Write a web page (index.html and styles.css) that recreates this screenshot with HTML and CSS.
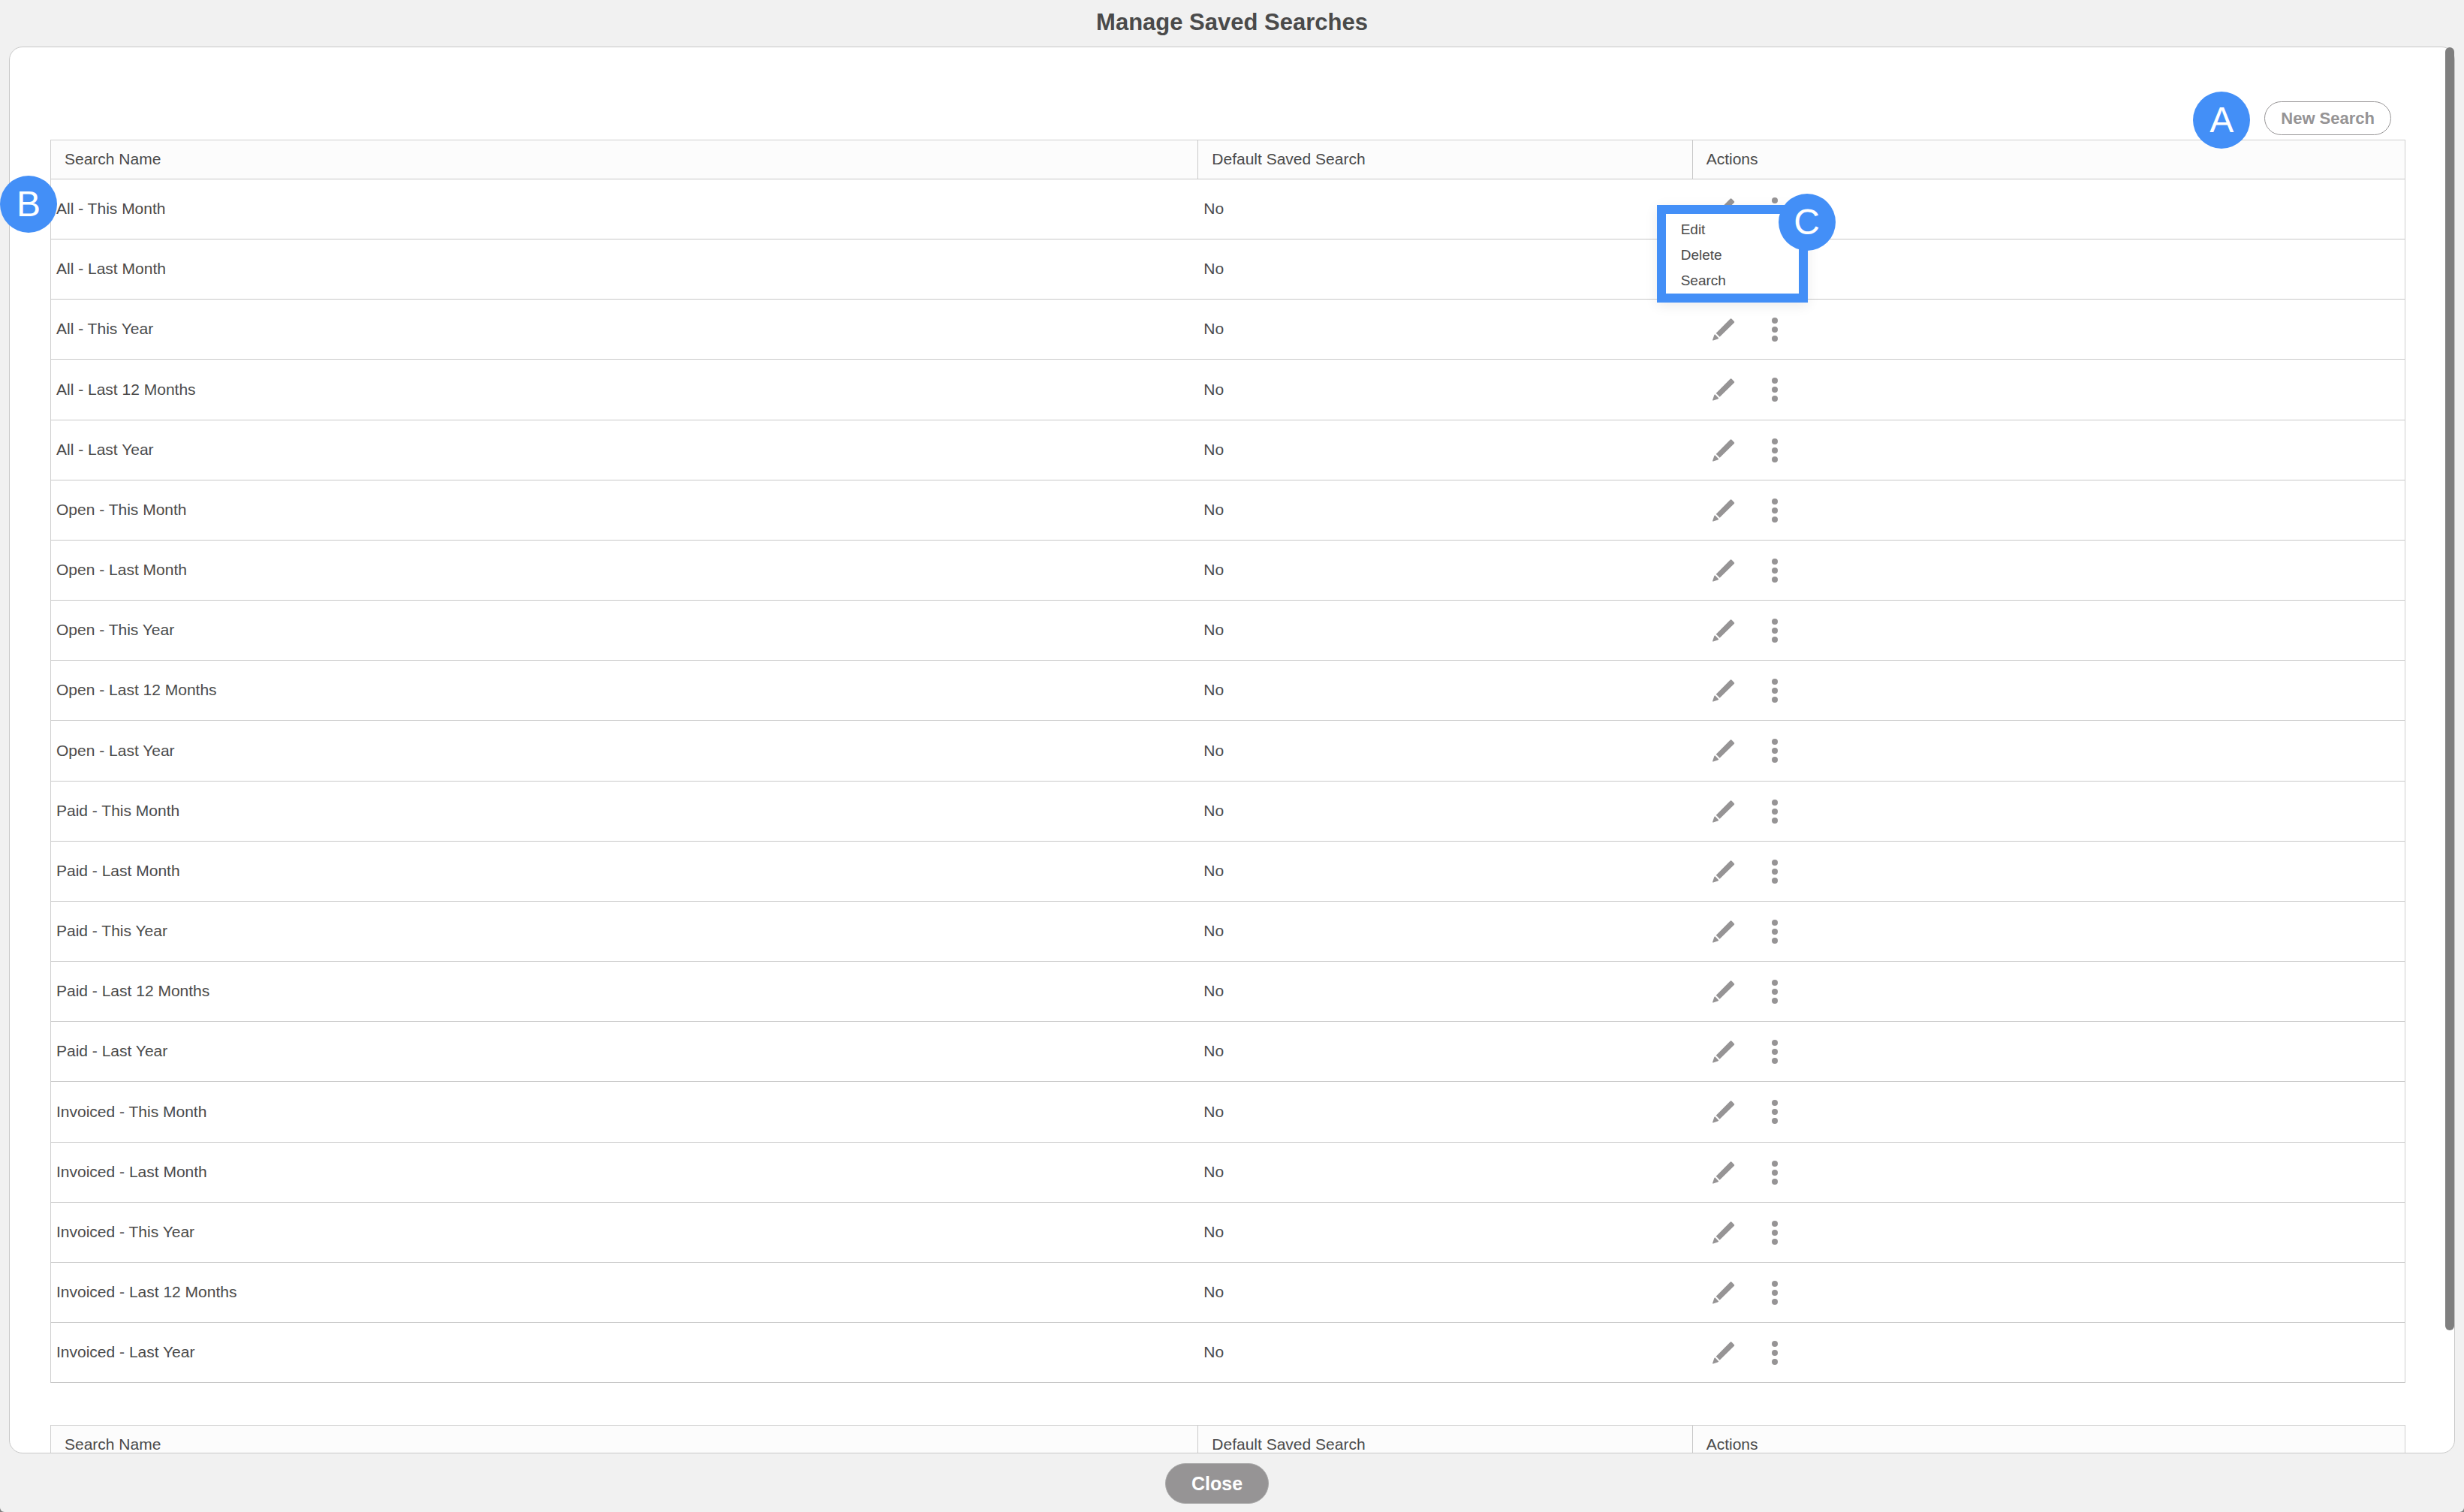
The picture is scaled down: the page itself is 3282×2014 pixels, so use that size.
FILE: index.html
```html
<!DOCTYPE html>
<html lang="en">
<head>
    <meta charset="UTF-8">
    <meta name="viewport" content="width=device-width, initial-scale=1.0">
    <title>Manage Saved Searches</title>
    <link rel="stylesheet" href="styles.css">
</head>
<body>
    <svg class="icon-defs" aria-hidden="true">
        <symbol id="icon-pencil" viewBox="0 0 30 30">
            <path d="M4.7 19.8 L23.6 0.8 Q24.6 -0.2 25.6 0.8 L28.7 4 Q29.7 5 28.7 6 L9.6 24.8 Z"/>
            <path d="M3.3 21.3 L8.2 26.3 Q8 27.3 7 27.6 L1 29.4 Q-0.2 29.6 0.2 28.4 L2.2 22.6 Q2.5 21.6 3.3 21.3 Z"/>
        </symbol>
        <symbol id="icon-dots" viewBox="0 0 8 32">
            <circle cx="4" cy="4" r="4"/>
            <circle cx="4" cy="16" r="4"/>
            <circle cx="4" cy="28" r="4"/>
        </symbol>
    </svg>

    <div class="dialog">
        <header class="dialog-header">
            <h1>Manage Saved Searches</h1>
        </header>

        <main class="panel">
            <div class="panel-content">
                <div class="toolbar">
                    <div class="toolbar-item">
                        <span class="badge badge-a">A</span>
                        <button type="button" class="new-search">New Search</button>
                    </div>
                </div>

                <table class="searches">
                    <thead>
                        <tr>
                            <th class="col-name">Search Name</th>
                            <th class="col-default">Default Saved Search</th>
                            <th>Actions</th>
                        </tr>
                    </thead>
                    <tbody id="searchRows"></tbody>
                </table>

                <table class="searches">
                    <thead>
                        <tr>
                            <th class="col-name">Search Name</th>
                            <th class="col-default">Default Saved Search</th>
                            <th>Actions</th>
                        </tr>
                    </thead>
                </table>
            </div>
            <div class="scroll-thumb"></div>
            <span class="badge badge-b">B</span>
        </main>

        <footer class="dialog-footer">
            <button type="button" class="close">Close</button>
        </footer>
    </div>

    <template id="rowMenu">
        <div class="row-menu">
            <button type="button">Edit</button>
            <button type="button">Delete</button>
            <button type="button">Search</button>
            <span class="badge badge-c">C</span>
        </div>
    </template>

    <script>
        const groups = ['All', 'Open', 'Paid', 'Invoiced'];
        const periods = ['This Month', 'Last Month', 'This Year', 'Last 12 Months', 'Last Year'];
        const tbody = document.getElementById('searchRows');

        // One row for each group and period
        groups.forEach(function(group) {
            periods.forEach(function(period) {
                const row = document.createElement('tr');
                row.innerHTML = `
                    <td>${group} - ${period}</td>
                    <td>No</td>
                    <td class="actions">
                        <div class="action-icons">
                            <button type="button" aria-label="Edit"><svg class="icon-pencil"><use href="#icon-pencil"/></svg></button>
                            <button type="button" aria-label="More"><svg class="icon-dots"><use href="#icon-dots"/></svg></button>
                        </div>
                    </td>`;
                tbody.appendChild(row);
            });
        });

        // The menu is open on the first row
        const menu = document.getElementById('rowMenu').content.cloneNode(true);
        tbody.querySelector('.actions').appendChild(menu);
    </script>
</body>
</html>
```
FILE: styles.css
```css
* {
    box-sizing: border-box;
}
body {
    margin: 0;
    background-color: #808080;
    color: #4a4a4a;
    font-family: "Liberation Sans", Arial, sans-serif;
    font-size: 21px;
}
button {
    font-family: inherit;
    cursor: pointer;
}
.icon-defs {
    display: none;
}
.dialog {
    display: flex;
    flex-direction: column;
    height: 100vh;
    background-color: #f1f1f1;
    border-radius: 0 0 6px 6px;
}
.dialog-header {
    height: 62px;
    padding-top: 12px;
    text-align: center;
}
.dialog-header h1 {
    margin: 0;
    font-size: 31px;
    line-height: 36px;
}
.panel {
    position: relative;
    flex: 1;
    min-height: 0;
    margin: 0 12px;
}
.panel-content {
    height: 100%;
    padding: 0 65px 0 54px;
    overflow: hidden;
    background-color: #fff;
    border: 1px solid #c8c8c8;
    border-radius: 18px;
}
.scroll-thumb {
    position: absolute;
    top: 1px;
    right: 1px;
    width: 12px;
    height: 91.2%;
    background-color: #7f7f7f;
    border-radius: 6px;
}
.toolbar {
    display: flex;
    justify-content: flex-end;
    padding: 72px 19px 6px 0;
}
.toolbar-item {
    position: relative;
}
.new-search {
    display: block;
    height: 45px;
    padding: 0 21px;
    background-color: #fff;
    border: 1px solid #969495;
    border-radius: 23px;
    color: #969495;
    font-size: 22px;
    font-weight: bold;
}

/* Tables */
.searches {
    width: 100%;
    margin-bottom: 56px;
    table-layout: fixed;
    border: 1px solid #cfcfcf;
    border-bottom: none;
    border-spacing: 0;
}
.searches th {
    height: 52px;
    padding: 0 18px 1px;
    background-color: #fcfcfc;
    border-right: 1px solid #c8c8c8;
    border-bottom: 1px solid #c8c8c8;
    font-weight: normal;
    text-align: left;
}
.searches th:last-child {
    border-right: none;
}
.searches .col-name {
    width: 48.75%;
}
.searches .col-default {
    width: 21%;
}
.searches td {
    height: 80px;
    padding: 0 7px 1px;
    border-bottom: 1px solid #c8c8c8;
}
.searches tr:nth-child(6n+4) td {
    height: 81px;
}
.searches .actions {
    position: relative;
    padding: 0 26px;
}
.action-icons {
    display: flex;
    align-items: center;
    gap: 49px;
}
.action-icons button {
    display: flex;
    padding: 0;
    background: none;
    border: none;
}
.action-icons svg {
    fill: #969495;
}
.icon-pencil {
    width: 30px;
    height: 30px;
}
.icon-dots {
    width: 8px;
    height: 32px;
}

/* Open row menu */
.row-menu {
    position: absolute;
    top: 34px;
    left: -48px;
    z-index: 1;
    width: 201px;
    padding: 4px 0 0 20px;
    background-color: #fff;
    border: 12px solid #438ff7;
    box-shadow: 0 4px 16px rgba(0, 0, 0, 0.08);
}
.row-menu button {
    display: block;
    height: 34px;
    padding: 0;
    background: none;
    border: none;
    color: #4a4a4a;
    font-size: 19px;
}

/* Callout badges */
.badge {
    position: absolute;
    width: 76px;
    height: 76px;
    background-color: #438ff7;
    border-radius: 50%;
    color: #fff;
    font-size: 48px;
    line-height: 76px;
    text-align: center;
}
.badge-a {
    top: -13px;
    left: -95px;
}
.badge-b {
    top: 172px;
    left: -12px;
}
.badge-c {
    top: -27px;
    right: -49px;
}

.dialog-footer {
    display: flex;
    justify-content: center;
    height: 78px;
    padding: 13px 40px 0 0;
}
.close {
    height: 54px;
    padding: 0 34px;
    background-color: #969495;
    border: 1px solid #a8a8a8;
    border-radius: 27px;
    color: #fff;
    font-size: 25px;
    font-weight: bold;
}
```
